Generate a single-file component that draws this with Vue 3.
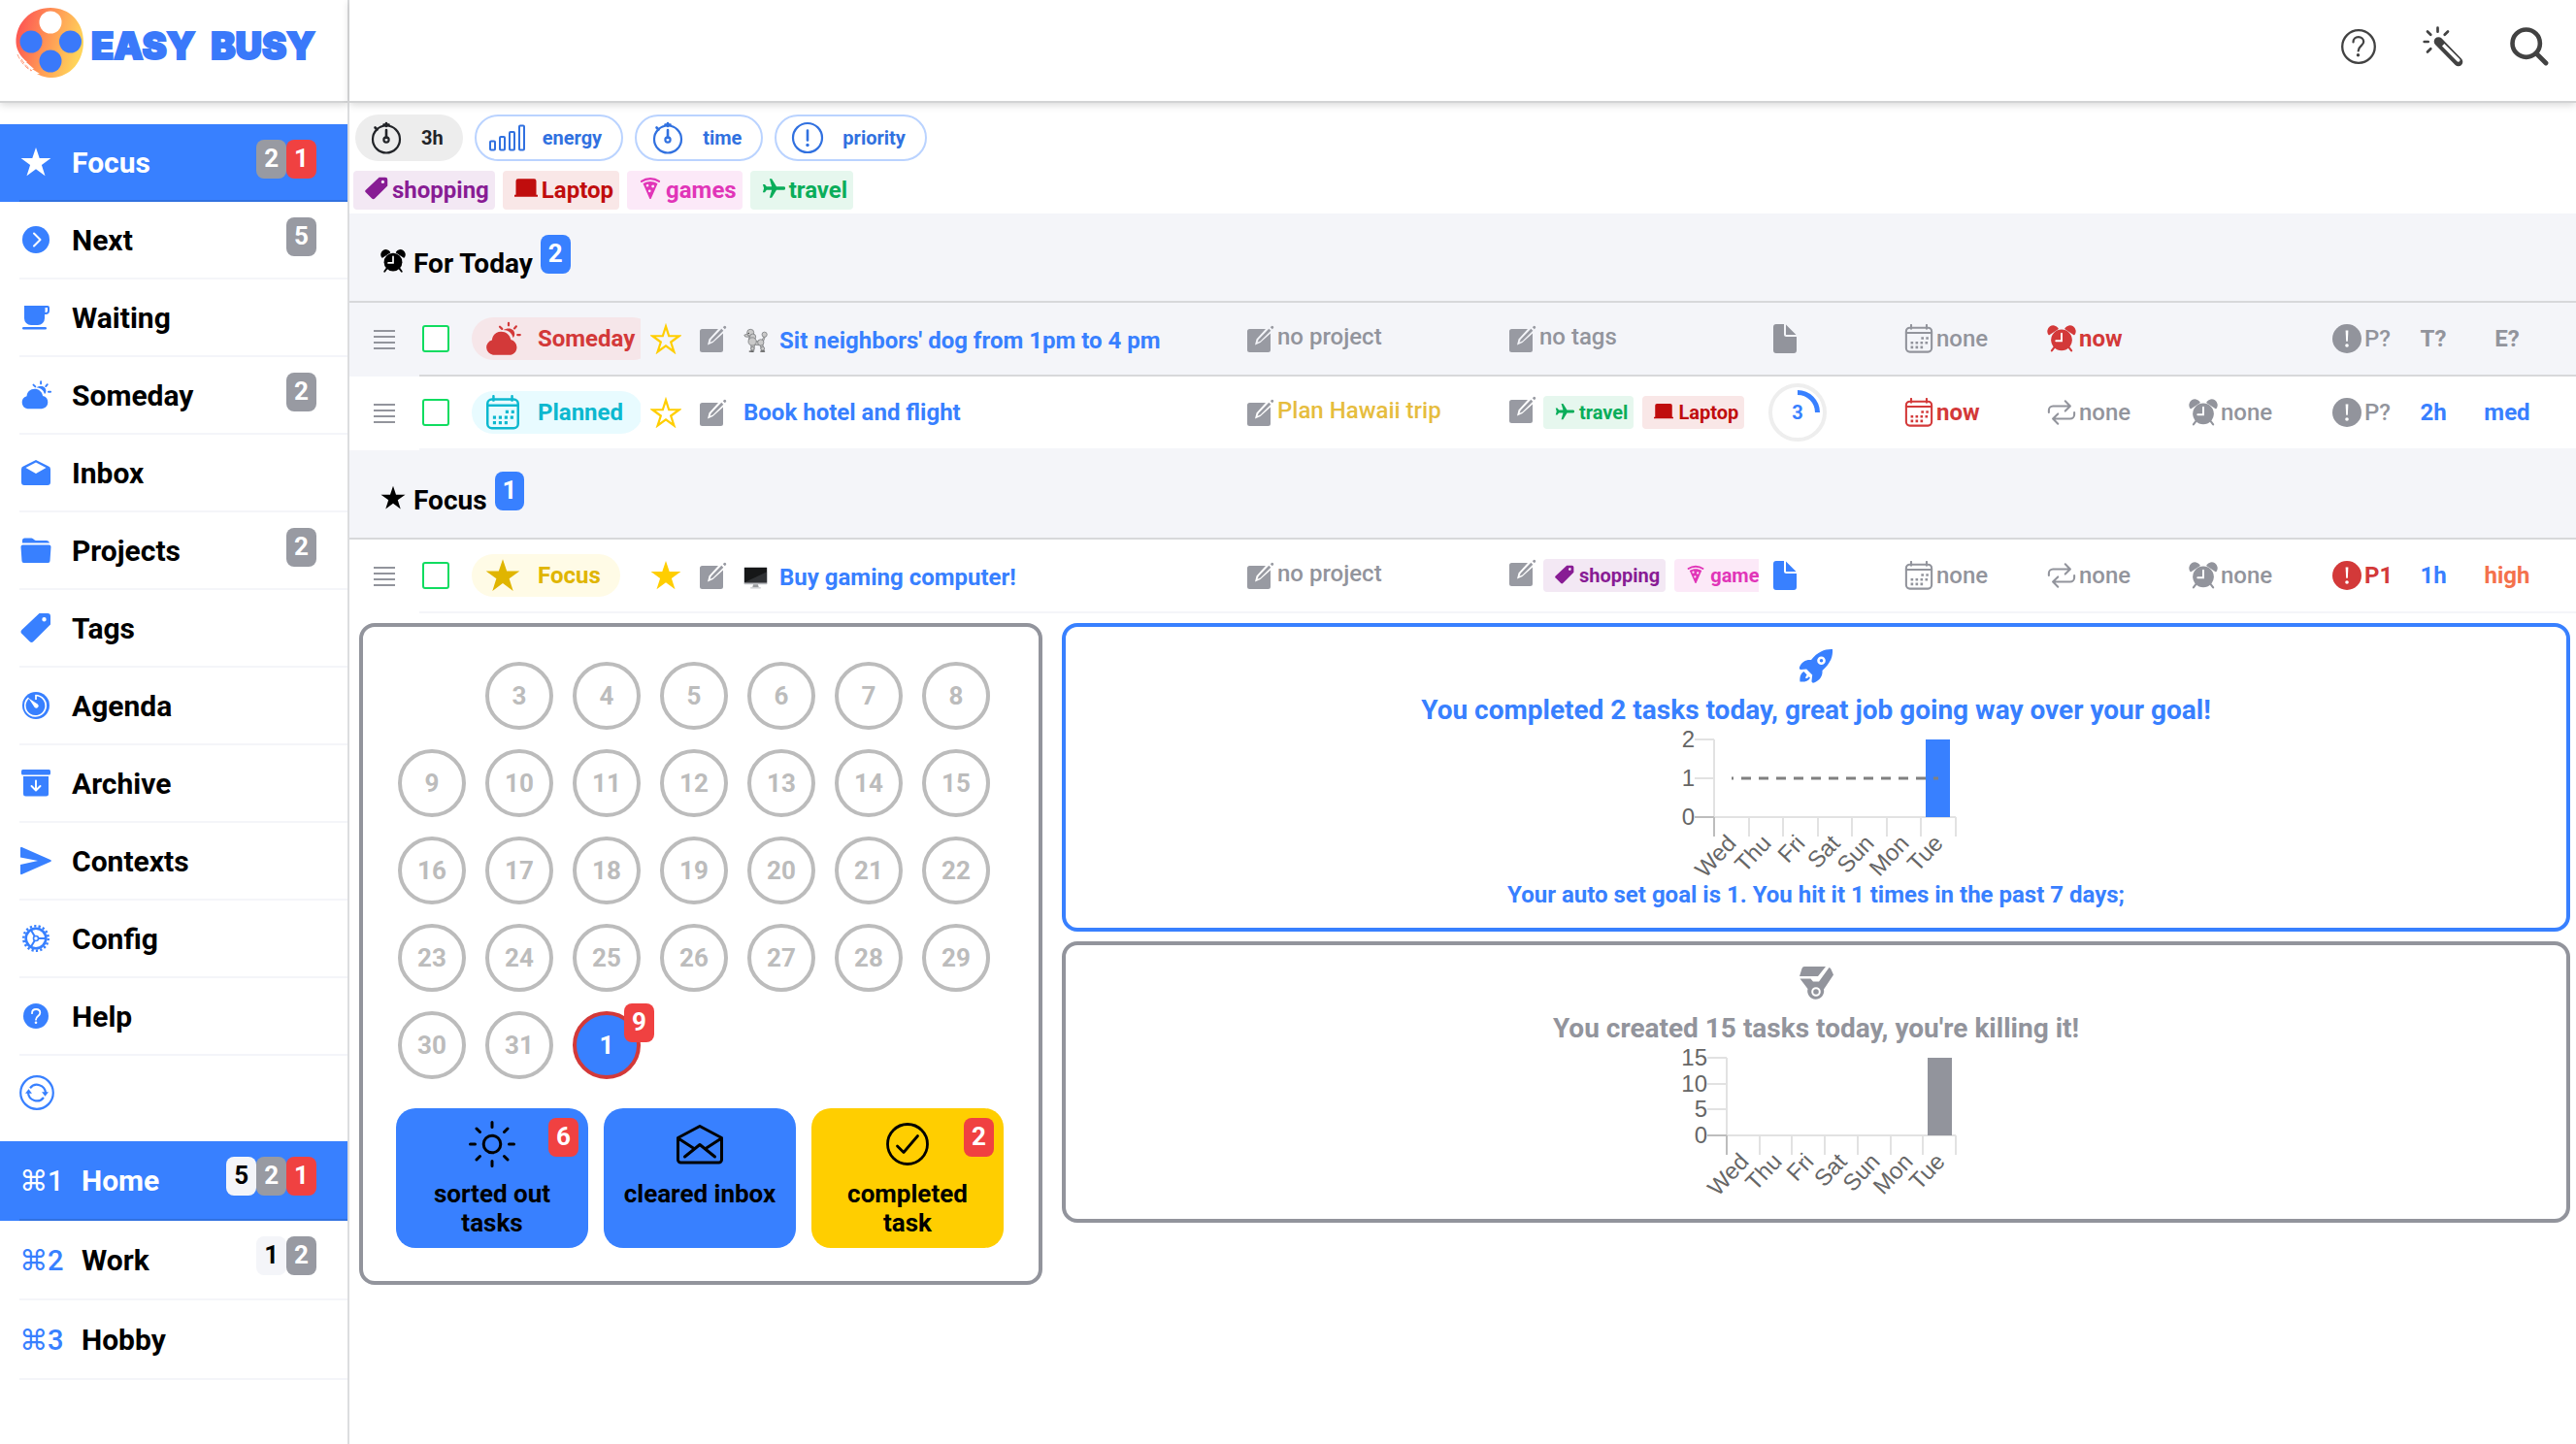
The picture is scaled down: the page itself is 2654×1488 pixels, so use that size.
<template>
  <div class="app">
    <svg class="sprite" aria-hidden="true">
      <symbol id="i-star" viewBox="0 0 32 32"><path fill="currentColor" d="M16 1l3.7 11H31.4l-9.5 6.9 3.6 11.3L16 23.2 6.5 30.2l3.6-11.3L.6 12h11.7z" /></symbol>
      <symbol id="i-star-outline" viewBox="2 1 28 29"><path fill="none" stroke="currentColor" stroke-width="2" stroke-linejoin="miter" d="M16 4l2.9 9h9.5l-7.7 5.7 2.9 9L16 22.1l-7.6 5.6 2.9-9L3.6 13h9.5z" /></symbol>
      <symbol id="i-next" viewBox="0 0 32 32"><circle cx="16" cy="16" r="14" fill="currentColor" /><path d="M14 9.5l6.5 6.5-6.5 6.5" fill="none" stroke="#fff" stroke-width="2" stroke-linecap="round" stroke-linejoin="round" /></symbol>
      <symbol id="i-cup" viewBox="0 0 32 32"><path fill="currentColor" d="M4 4h24a2 2 0 0 1 2 2v3a4 4 0 0 1-4 4h-1v4a7 7 0 0 1-7 7h-7a7 7 0 0 1-7-7zM25.5 6v5h.8A1.7 1.7 0 0 0 28 9.300V6z" fill-rule="evenodd" /><rect x="2" y="26" width="25" height="2.600" rx="1.300" fill="currentColor" /></symbol>
      <symbol id="i-cloud" viewBox="0 0 36 32"><path fill="currentColor" d="M9 31a7 7 0 0 1-1-13.700C8.500 12.500 12 9.500 16.500 9.500c4.500 0 8 2.800 9 7.500a7 7 0 0 1 5.500 7c0 4-3 7-7 7z" /><path fill="currentColor" d="M18.500 8c4.500 0 7.800 2.600 9 7 1-.8 1.500-2 1.500-3.500C29 8.500 26.500 6.500 23.700 6.500c-2 0-3.900.500-5.200 1.500z" /><path d="M23.400 1.500v2.200M30.500 4.600l-1.700 1.900M15.300 5l2 1.900M31.700 12.500h2.300" fill="none" stroke="currentColor" stroke-width="2" stroke-linecap="round" /></symbol>
      <symbol id="i-inbox" viewBox="0 0 32 32"><path fill="currentColor" fill-rule="evenodd" d="M16 3l13 6.600a3 3 0 0 1 2 2.800V26a3 3 0 0 1-3 3H4a3 3 0 0 1-3-3V12.400a3 3 0 0 1 2-2.800zM5.500 11L16 17l10.500-6L16 5.500z" /></symbol>
      <symbol id="i-folder" viewBox="0 0 32 32"><path fill="currentColor" d="M2 8.500V6a2.500 2.500 0 0 1 2.500-2.500h7c2 0 2.500 2.500 4.500 2.500h11a3 3 0 0 1 3 2.500zM2.500 10.500h27a2 2 0 0 1 2 2L30.500 27a2 2 0 0 1-2 2h-25a2 2 0 0 1-2-2L.5 12.500a2 2 0 0 1 2-2z" /></symbol>
      <symbol id="i-tag" viewBox="0 0 32 32"><path fill="currentColor" fill-rule="evenodd" d="M19.500 1H28a3 3 0 0 1 3 3v8.500L13.500 30a2.800 2.800 0 0 1-4 0L1.500 22a2.500 2.500 0 0 1 0-4zM24.500 5a2.200 2.200 0 1 0 .01 4.400A2.200 2.200 0 0 0 24.500 5z" /></symbol>
      <symbol id="i-agenda" viewBox="0 0 32 32"><circle cx="16" cy="16" r="14" fill="currentColor" /><path d="M16 5v5M15.500 5.500a10.700 10.700 0 1 1-7 2.600" fill="none" stroke="#fff" stroke-width="1.700" /><path d="M8.500 8.500l9.500 6.200a2.300 2.300 0 1 1-3.300 3.300z" fill="#fff" /></symbol>
      <symbol id="i-archive" viewBox="0 0 32 32"><rect x="1" y="2" width="30" height="5.500" rx="1.500" fill="currentColor" /><path fill="currentColor" d="M3 9h26v18a2.500 2.500 0 0 1-2.500 2.500h-21A2.500 2.500 0 0 1 3 27z" /><path d="M16 13.500v9.500M11.500 19l4.500 4.500 4.500-4.500" fill="none" stroke="#fff" stroke-width="1.900" stroke-linecap="round" stroke-linejoin="round" /></symbol>
      <symbol id="i-send" viewBox="0 0 32 32"><path fill="currentColor" d="M1.500 2L31 15c1.200.600 1.200 1.400 0 2L1.500 30a1 1 0 0 1-1.500-1v-9l18-4L0 12.500V3a1 1 0 0 1 1.500-1z" /></symbol>
      <symbol id="i-cog" viewBox="0 0 32 32"><circle cx="16" cy="16" r="10.300" fill="none" stroke="currentColor" stroke-width="2.600" /><circle cx="16" cy="16" r="12.700" fill="none" stroke="currentColor" stroke-width="2.600" stroke-dasharray="2.200 2.232" /><circle cx="16" cy="16" r="2.500" fill="#fff" stroke="currentColor" stroke-width="1.600" /><path d="M18.500 16H26M14.700 13.800L11 7.500M14.700 18.200L11 24.500" stroke="currentColor" stroke-width="2" /></symbol>
      <symbol id="i-help" viewBox="0 0 32 32"><circle cx="16" cy="16" r="13" fill="currentColor" /><path d="M12 13.200c0-2.500 1.800-4.200 4.200-4.200 2.300 0 4.100 1.500 4.100 3.700 0 3.300-4.300 3.300-4.300 7" fill="none" stroke="#fff" stroke-width="1.800" stroke-linecap="round" /><circle cx="16" cy="22.700" r="1.300" fill="#fff" /></symbol>
      <symbol id="i-sync" viewBox="0 0 36 36"><g fill="none" stroke="currentColor" stroke-width="2.200"><circle cx="18" cy="18" r="16.800" /><path d="M11 13.200A9 9 0 0 1 27 18M25 23A9 9 0 0 1 9 18" /></g><path fill="currentColor" d="M6 18.800l3.500-4.600 3.500 4.600zM23 17.200l3.500 4.600 3.500-4.600z" /></symbol>
      <symbol id="i-help-outline" viewBox="0 0 36 36"><circle cx="18" cy="18" r="16.800" fill="none" stroke="currentColor" stroke-width="2.300" /><path d="M12.500 13.500c0-3.200 2.200-5.300 5.300-5.300s5.400 1.900 5.400 4.900c0 4-5.500 4.300-5.500 9.400" fill="none" stroke="currentColor" stroke-width="2.200" stroke-linecap="round" /><circle cx="17.500" cy="26.700" r="1.700" fill="currentColor" /></symbol>
      <symbol id="i-wand" viewBox="0 0 42 42"><path fill="currentColor" fill-rule="evenodd" d="M13 12.500a4.700 4.700 0 0 1 6.600 0L40 33.500a4.500 4.500 0 0 1-6.400 6.400L13 19a4.700 4.700 0 0 1 0-6.500zM20 20.600l15.300 15.500a1.700 1.700 0 0 0 2.700-2.300L22.300 18z" /><path d="M15.500 1.700v4M5 5.500l3.300 3.300M26 5.500l-3.300 3.300M1.700 16h4M5 26.500l3.300-3.300" stroke="currentColor" stroke-width="2.700" stroke-linecap="round" /></symbol>
      <symbol id="i-search" viewBox="0 0 40 40"><circle cx="16.700" cy="16.700" r="14.200" fill="none" stroke="currentColor" stroke-width="4.600" /><path d="M27 27l10 10" stroke="currentColor" stroke-width="4.800" stroke-linecap="round" /></symbol>
      <symbol id="i-timer" viewBox="0 0 40 40"><circle cx="20" cy="21.500" r="14" fill="none" stroke="currentColor" stroke-width="2.200" /><path d="M20 12v8M20 5v3M8.500 9.500l2 2M17.500 6.500h5" fill="none" stroke="currentColor" stroke-width="2.600" stroke-linecap="round" /><circle cx="20" cy="22" r="2.600" fill="none" stroke="currentColor" stroke-width="2.200" /></symbol>
      <symbol id="i-bars" viewBox="0 0 40 40"><g fill="none" stroke="currentColor" stroke-width="2"><rect x="2" y="23.500" width="5" height="9" rx="1" /><rect x="12" y="19" width="5" height="13.500" rx="1" /><rect x="22" y="14" width="5" height="18.500" rx="1" /><rect x="32" y="7.500" width="5" height="25" rx="1" /></g></symbol>
      <symbol id="i-alert-outline" viewBox="0 0 40 40"><circle cx="20" cy="20" r="15" fill="none" stroke="currentColor" stroke-width="2.200" /><path d="M20 12.500v10" stroke="currentColor" stroke-width="2.600" stroke-linecap="round" /><circle cx="20" cy="27.500" r="1.700" fill="currentColor" /></symbol>
      <symbol id="i-laptop" viewBox="0 0 32 32"><path fill="currentColor" d="M5 3h22a3 3 0 0 1 3 3v19h2v2.500H0V25h2V6a3 3 0 0 1 3-3z" /></symbol>
      <symbol id="i-pizza" viewBox="0 0 32 32"><path d="M4 6.500C11 1.500 21 1.500 28 6.500" fill="none" stroke="currentColor" stroke-width="3" stroke-linecap="round" /><path fill="currentColor" fill-rule="evenodd" d="M6 9.500c6.500-3.700 13.500-3.700 20 0L16.800 30.500h-1.600zM12 10.500a1.800 1.800 0 1 0 .01 3.600 1.800 1.800 0 0 0-.01-3.600zM19.500 11.500a1.900 1.900 0 1 0 .01 3.800 1.900 1.900 0 0 0-.01-3.800zM15 18a1.800 1.800 0 1 0 .01 3.600A1.800 1.800 0 0 0 15 18z" /></symbol>
      <symbol id="i-plane" viewBox="0 0 32 32"><path fill="currentColor" d="M30 18.300H20L13.500 29h-3l3-10.700H6.500L4 21.500H1.200L2.800 16 1.200 10.500H4l2.500 3.200h7L10.500 3h3L20 13.700h10a2.300 2.300 0 0 1 0 4.600z" /></symbol>
      <symbol id="i-alarm" viewBox="-1 -1 34 34"><g fill="currentColor"><circle cx="16" cy="17.500" r="12.300" /><path d="M1.500 10.500A5.500 5.500 0 0 1 11 4.200zM30.500 10.500A5.500 5.500 0 0 0 21 4.200z" stroke="currentColor" stroke-width="2.400" stroke-linejoin="round" /></g><path d="M7.500 26l-3 4M24.500 26l3 4" stroke="currentColor" stroke-width="2.400" stroke-linecap="round" /><path d="M16 10v8.500H9.500" fill="none" stroke="#fff" stroke-width="2.200" stroke-linecap="round" /></symbol>
      <symbol id="i-calendar" viewBox="0 0 32 32"><rect x="2" y="4" width="28" height="26.500" rx="4" fill="none" stroke="currentColor" stroke-width="2.200" /><path d="M2 9.500h28M7.500 1v4M24.500 1v4" stroke="currentColor" stroke-width="2.200" stroke-linecap="round" /><path d="M18.500 15.500h8M7 20.500h20M7 25.500h14" stroke="currentColor" stroke-width="2.800" stroke-dasharray="2.800 2.500" /></symbol>
      <symbol id="i-repeat" viewBox="0 0 32 32"><path d="M2 16v-2.500C2 11 4 9 6.500 9H24M20 3.500L25.500 9 20 14.500M30 16v2.500c0 2.500-2 4.500-4.500 4.500H8M12 17.500L6.500 23l5.500 5.500" fill="none" stroke="currentColor" stroke-width="2.200" stroke-linecap="round" stroke-linejoin="round" /></symbol>
      <symbol id="i-alert" viewBox="0 0 28 28"><circle cx="14" cy="14" r="14" fill="currentColor" /><path d="M12.700 6h2.600l-.5 10.500h-1.600z" fill="#fff" /><circle cx="14" cy="20.500" r="1.700" fill="#fff" /></symbol>
      <symbol id="i-edit" viewBox="0 0 28 28"><path fill="currentColor" d="M2.500 4H19L9.500 14.500l-1.500 6 5.500-2.500L24 8.500V25.500a2.500 2.500 0 0 1-2.500 2.500h-19A2.500 2.500 0 0 1 0 25.500v-19A2.500 2.500 0 0 1 2.500 4z" /><path fill="currentColor" d="M22.300 3.800l2 2L13.500 16.500l-3 1.200 1.200-3zM24.800 1.300a1.300 1.300 0 0 1 2 2l-1 1-2-2z" /></symbol>
      <symbol id="i-file" viewBox="0 0 24 30"><path fill="currentColor" d="M3 0h8v10.500a2.500 2.500 0 0 0 2.500 2.500H24v14a3 3 0 0 1-3 3H3a3 3 0 0 1-3-3V3a3 3 0 0 1 3-3zM13 .5l10.500 10.500H13z" /></symbol>
      <symbol id="i-drag" viewBox="0 0 22 22"><path d="M0 2h22M0 8h22M0 14h22M0 20h22" stroke="currentColor" stroke-width="2" /></symbol>
      <symbol id="i-sun" viewBox="0 0 48 48"><g fill="none" stroke="currentColor" stroke-width="3" stroke-linecap="round"><circle cx="24" cy="24" r="8.800" /><path d="M24 1.500v5M24 41.500v5M1.500 24h5M41.500 24h5M8 8l3.500 3.500M36.500 36.500L40 40M8 40l3.500-3.500M36.500 11.500L40 8" /></g></symbol>
      <symbol id="i-mail-open" viewBox="0 0 48 48"><g fill="none" stroke="currentColor" stroke-width="3" stroke-linejoin="round" stroke-linecap="round"><path d="M1.500 17.500L24 5.500l22.500 12V40a3 3 0 0 1-3 3h-39a3 3 0 0 1-3-3z" /><path d="M2.500 18.500L18 28.500M45.500 18.500L30 28.500M8.500 37L24 24.500 39.500 37" /></g></symbol>
      <symbol id="i-check" viewBox="0 0 48 48"><g fill="none" stroke="currentColor" stroke-width="2.800" stroke-linecap="round" stroke-linejoin="round"><circle cx="24" cy="24" r="20.500" /><path d="M13.500 26l6.500 6.500L34.500 15.500" /></g></symbol>
      <symbol id="i-rocket" viewBox="0 0 36 36"><path fill="currentColor" fill-rule="evenodd" d="M35 1c.500 7-1.500 14-10.500 22 .5 5.500-2.500 10-8.500 12.500-1.500.500-2.800-.500-2.500-2l.7-6-6-6-5.700.500c-1.500 0-2-1-1.500-2.500C3 14 7.500 11.500 13 12 20 3 28 .5 35 1zM23.500 8.500a4.300 4.300 0 1 0 .01 8.600 4.300 4.300 0 0 0-.01-8.600zM23.500 11a1.800 1.800 0 1 1 .01 3.600A1.800 1.800 0 0 1 23.500 11z" /><path fill="currentColor" d="M5.500 24C2 26 1 30 1.500 34.500c4.500.500 8.500-.5 10.500-4l-1.300-1.300c-1 1.300-2 1.800-3.500 1.800 0-1.500.500-2.500 1.500-3.500z" /></symbol>
      <symbol id="i-medal" viewBox="0 0 36 36"><path fill="currentColor" d="M6 0h22L20 10H1L3.500 2C4 .7 4.800 0 6 0zM1.500 12.500h11l2.500 3h6L31.500 1c1.300.4 2 1.500 2.500 3l2 4.500-10 15a8.500 8.500 0 1 1-16.500-.5z" /><circle cx="18" cy="26" r="3.800" fill="none" stroke="#fff" stroke-width="2" /></symbol>
    </svg>

    <aside class="sidebar">
      <div class="toolbar">
        <a class="logo" href="#">
          <svg width="72" height="74" viewBox="0 0 72 74" aria-hidden="true">
            <defs>
              <linearGradient id="sunset" x1="0" y1="0.300" x2="1" y2="0.600">
                <stop offset="0.050" stop-color="#fd5a53" />
                <stop offset="0.550" stop-color="#ffa156" />
                <stop offset="0.950" stop-color="#ffd45a" />
              </linearGradient>
            </defs>
            <path fill="url(#sunset)" d="M37 0c20 0 34 15 34 35S58 71 39 72c-8 0-12-2-16-4l3 0-8-5 2 0-8-7 1 0C6 50 2 44 1.500 36 1 15 17 0 37 0z" />
            <path d="M3 48c4 9 8 13 14 17M7 53c4 6 7 9 11 12" fill="none" stroke="#ff9b7a" stroke-width="1" stroke-dasharray="5 2" />
            <circle cx="37" cy="15" r="11.500" fill="#fff" />
            <g fill="#3a79fa"><circle cx="17" cy="35" r="11.500" /><circle cx="57.500" cy="35" r="11.500" /><circle cx="37" cy="55" r="11.500" /></g>
          </svg>
          <span class="brand"><span>EASY</span><span>BUSY</span></span>
        </a>
      </div>
      <nav class="nav">
        <a v-for="item in lists" :key="item.label" href="#" class="nav-item" :class="{ active: item.active }">
          <svg class="nav-icon"><use :href="'#i-' + item.icon" /></svg>
          <span class="nav-inner">
            <span class="nav-label">{{ item.label }}</span>
            <span class="badges"><span v-for="b in item.badges" :key="b.color" class="badge" :class="b.color">{{ b.n }}</span></span>
          </span>
        </a>
      </nav>
      <button class="sync" aria-label="Sync"><svg><use href="#i-sync" /></svg></button>
      <nav class="nav contexts">
        <a v-for="ctx in contexts" :key="ctx.label" href="#" class="nav-item" :class="{ active: ctx.active }">
          <span class="shortcut">{{ ctx.key }}</span>
          <span class="nav-inner">
            <span class="nav-label">{{ ctx.label }}</span>
            <span class="badges"><span v-for="b in ctx.badges" :key="b.color" class="badge" :class="b.color">{{ b.n }}</span></span>
          </span>
        </a>
      </nav>
    </aside>

    <main class="main">
      <header class="toolbar actions">
        <button aria-label="Help"><svg width="36" height="36"><use href="#i-help-outline" /></svg></button>
        <button aria-label="Assistant"><svg width="42" height="42"><use href="#i-wand" /></svg></button>
        <button aria-label="Search"><svg width="40" height="40"><use href="#i-search" /></svg></button>
      </header>

      <div class="filters">
        <button v-for="f in filters" :key="f.label" class="chip" :class="{ selected: f.selected }">
          <svg><use :href="'#i-' + f.icon" /></svg>{{ f.label }}
        </button>
      </div>
      <div class="tags">
        <button v-for="t in ['shopping', 'Laptop', 'games', 'travel']" :key="t" class="tag" :class="t">
          <svg><use :href="'#i-' + tagIcons[t]" /></svg>{{ t }}
        </button>
      </div>

      <section v-for="group in groups" :key="group.title">
        <h2 class="group-title">
          <svg><use :href="'#i-' + group.icon" /></svg>
          <span>{{ group.title }}</span>
          <span class="badge blue">{{ group.tasks.length }}</span>
        </h2>
        <div v-for="task in group.tasks" :key="task.title" class="task" :class="{ shaded: task.shaded }">
          <svg class="drag"><use href="#i-drag" /></svg>
          <div class="task-body">
            <div><input type="checkbox" class="done" :aria-label="task.title" /></div>
            <div class="state-cell">
              <button class="state" :class="task.state"><svg><use :href="'#i-' + stateIcons[task.state]" /></svg>{{ task.state }}</button>
            </div>
            <button class="star" aria-label="Focus"><svg><use :href="task.starred ? '#i-star' : '#i-star-outline'" /></svg></button>
            <button class="edit" aria-label="Edit"><svg class="edit-icon"><use href="#i-edit" /></svg></button>
            <a href="#" class="title" :class="{ 'with-emoji': task.emoji }">
              <svg v-if="task.emoji === 'poodle'" class="emoji" viewBox="0 0 26 26">
                <g fill="#c9c9c9" stroke="#77797c" stroke-width="0.800">
                  <path d="M5 5.500L.8 7l1 1.800 4 .4z" />
                  <path d="M7.500 8l1.500 5 10 1 3-5.500 1 .7-2.500 7 1.500 8h-2.500L18 18l-6-.5-1 7.500H8.500L8 17 5.500 11z" />
                  <circle cx="7.500" cy="4.500" r="3.700" /><circle cx="10" cy="9" r="3.200" /><circle cx="9.500" cy="14" r="4.300" />
                  <circle cx="18.500" cy="15" r="3.300" /><circle cx="22.500" cy="6.500" r="2.700" /><circle cx="9.700" cy="21.500" r="1.800" /><circle cx="20.500" cy="21.500" r="2" />
                </g>
                <circle cx="5.500" cy="5" r="0.700" fill="#222" />
                <path d="M6 24.500h4.500M18 24.500h5" stroke="#555" stroke-width="1.400" />
              </svg>
              <svg v-if="task.emoji === 'desktop'" class="emoji" viewBox="0 0 26 26">
                <rect x="0.500" y="2" width="25" height="18.500" rx="1" fill="#b9bbbf" />
                <rect x="1" y="2.500" width="24" height="16" fill="#161718" /><path d="M1 18.500L25 7v11.500z" fill="#303235" />
                <path d="M10.500 20.500h5l1 3.500h-7z" fill="#9a9ca0" /><rect x="7.500" y="23.500" width="11" height="1.500" fill="#d0d1d4" />
              </svg>
              {{ task.title }}
            </a>
            <div class="project">
              <svg class="edit-icon"><use href="#i-edit" /></svg>
              <span :class="{ named: task.project }">{{ task.project || 'no project' }}</span>
            </div>
            <div class="task-tags" :class="{ filled: task.tags.length }">
              <svg class="edit-icon"><use href="#i-edit" /></svg>
              <span v-if="!task.tags.length" class="no-tags">no tags</span>
              <span v-for="t in task.tags" :key="t" class="tag small" :class="t"><svg><use :href="'#i-' + tagIcons[t]" /></svg>{{ t }}</span>
            </div>
            <div class="notes">
              <svg v-if="task.subtasks" width="60" height="60" viewBox="0 0 60 60" class="progress">
                <circle cx="30" cy="30" r="28" fill="none" stroke="#eee" stroke-width="4" />
                <path d="M30 9.500A20.500 20.500 0 0 1 50.500 30" fill="none" stroke="currentColor" stroke-width="5" />
                <text x="30" y="37" text-anchor="middle">{{ task.subtasks }}</text>
              </svg>
              <svg v-else class="file" :class="{ on: task.note }"><use href="#i-file" /></svg>
            </div>
            <div v-for="(m, i) in task.meta" :key="i" class="meta" :class="m && m.color">
              <template v-if="m"><svg><use :href="'#i-' + m.icon" /></svg>{{ m.text }}</template>
            </div>
            <div class="level" :class="task.energy">{{ task.time }}</div>
            <div class="level energy" :class="task.energy">{{ task.energy || 'E?' }}</div>
          </div>
        </div>
      </section>

      <div class="dashboard">
        <section class="card calendar">
          <ol class="days">
            <li v-for="d in days" :key="d" class="day" :class="{ today: d === 1, first: d === 3 }">
              {{ d }}<span v-if="d === 1" class="badge red">9</span>
            </li>
          </ol>
          <div class="tiles">
            <div v-for="a in achievements" :key="a.text" class="tile" :class="{ yellow: a.yellow }">
              <svg><use :href="'#i-' + a.icon" /></svg>
              <span>{{ a.text }}</span>
              <span v-if="a.count" class="badge red">{{ a.count }}</span>
            </div>
          </div>
        </section>

        <div class="stats">
          <section v-for="s in stats" :key="s.icon" class="card stat" :class="s.color">
            <svg class="stat-icon"><use :href="'#i-' + s.icon" /></svg>
            <h3>{{ s.title }}</h3>
            <svg class="chart" width="300" height="158" viewBox="0 0 300 158">
              <g stroke="#e2e2e2" stroke-width="2">
                <path :d="`M${s.left} 12V92H294`" fill="none" />
                <path v-for="(y, i) in s.yTicks" :key="y" :d="`M${s.left - 20} ${tickY(s, i)}h20`" :stroke="y === 0 ? '#bdbdbd' : '#e2e2e2'" />
                <path v-for="i in 8" :key="i" :d="`M${tickX(s, i - 1)} 92v20`" :stroke="i === 1 ? '#bdbdbd' : '#e2e2e2'" />
              </g>
              <text v-for="(y, i) in s.yTicks" :key="'y' + y" :x="s.left - 20" :y="tickY(s, i) + 8" text-anchor="end">{{ y }}</text>
              <rect :x="tickX(s, 6) + 5" y="12" width="25" height="80" fill="currentColor" />
              <path v-if="s.goal" :d="`M${tickX(s, 0) + 18} 52H${tickX(s, 6) + 18}`" stroke="#808080" stroke-width="3" stroke-dasharray="10 8" stroke-dashoffset="8" />
              <text v-for="(d, i) in weekdays" :key="d" text-anchor="end" :transform="`translate(${tickX(s, i) + 24} 120) rotate(-47)`">{{ d }}</text>
            </svg>
            <p v-if="s.goal">{{ s.goal }}</p>
          </section>
        </div>
      </div>
    </main>
  </div>
</template>

<script setup>
const grey = n => ({ n, color: 'grey' });
const red = n => ({ n, color: 'red' });
const light = n => ({ n, color: 'light' });

const lists = [
  { label: 'Focus', icon: 'star', badges: [grey(2), red(1)], active: true },
  { label: 'Next', icon: 'next', badges: [grey(5)] },
  { label: 'Waiting', icon: 'cup' },
  { label: 'Someday', icon: 'cloud', badges: [grey(2)] },
  { label: 'Inbox', icon: 'inbox' },
  { label: 'Projects', icon: 'folder', badges: [grey(2)] },
  { label: 'Tags', icon: 'tag' },
  { label: 'Agenda', icon: 'agenda' },
  { label: 'Archive', icon: 'archive' },
  { label: 'Contexts', icon: 'send' },
  { label: 'Config', icon: 'cog' },
  { label: 'Help', icon: 'help' },
];

const contexts = [
  { key: '⌘1', label: 'Home', badges: [light(5), grey(2), red(1)], active: true },
  { key: '⌘2', label: 'Work', badges: [light(1), grey(2)] },
  { key: '⌘3', label: 'Hobby' },
];

const filters = [
  { label: '3h', icon: 'timer', selected: true },
  { label: 'energy', icon: 'bars' },
  { label: 'time', icon: 'timer' },
  { label: 'priority', icon: 'alert-outline' },
];

const tagIcons = { shopping: 'tag', Laptop: 'laptop', games: 'pizza', travel: 'plane' };
const stateIcons = { Someday: 'cloud', Planned: 'calendar', Focus: 'star' };

const groups = [
  {
    title: 'For Today',
    icon: 'alarm',
    tasks: [
      {
        title: 'Sit neighbors\' dog from 1pm to 4 pm',
        emoji: 'poodle',
        state: 'Someday',
        shaded: true,
        tags: [],
        meta: [
          { icon: 'calendar', text: 'none' },
          { icon: 'alarm', text: 'now', color: 'urgent' },
          null,
          { icon: 'alert', text: 'P?' },
        ],
        time: 'T?',
        energy: '',
      },
      {
        title: 'Book hotel and flight',
        state: 'Planned',
        project: 'Plan Hawaii trip',
        tags: ['travel', 'Laptop'],
        subtasks: 3,
        meta: [
          { icon: 'calendar', text: 'now', color: 'urgent' },
          { icon: 'repeat', text: 'none' },
          { icon: 'alarm', text: 'none' },
          { icon: 'alert', text: 'P?' },
        ],
        time: '2h',
        energy: 'med',
      },
    ],
  },
  {
    title: 'Focus',
    icon: 'star',
    tasks: [
      {
        title: 'Buy gaming computer!',
        emoji: 'desktop',
        state: 'Focus',
        starred: true,
        tags: ['shopping', 'games'],
        note: true,
        meta: [
          { icon: 'calendar', text: 'none' },
          { icon: 'repeat', text: 'none' },
          { icon: 'alarm', text: 'none' },
          { icon: 'alert', text: 'P1', color: 'urgent' },
        ],
        time: '1h',
        energy: 'high',
      },
    ],
  },
];

// 3rd to 31st, followed by today
const days = [...Array.from({ length: 29 }, (_, i) => i + 3), 1];

const achievements = [
  { text: 'sorted out tasks', icon: 'sun', count: 6 },
  { text: 'cleared inbox', icon: 'mail-open' },
  { text: 'completed task', icon: 'check', count: 2, yellow: true },
];

const weekdays = ['Wed', 'Thu', 'Fri', 'Sat', 'Sun', 'Mon', 'Tue'];
const stats = [
  {
    icon: 'rocket',
    color: 'blue',
    title: 'You completed 2 tasks today, great job going way over your goal!',
    goal: 'Your auto set goal is 1. You hit it 1 times in the past 7 days;',
    yTicks: [2, 1, 0],
    left: 45,
  },
  {
    icon: 'medal',
    color: 'grey',
    title: 'You created 15 tasks today, you\'re killing it!',
    yTicks: [15, 10, 5, 0],
    left: 58,
  },
];

const tickX = (s, i) => Math.round(s.left + (294 - s.left) * i / 7);
const tickY = (s, i) => Math.round(12 + 80 * i / (s.yTicks.length - 1));
</script>

<style>
body { margin: 0; background: #fff; }
</style>

<style scoped>
.app { display: grid; grid-template-columns: 360px 1fr; min-height: 100vh; font-family: Roboto, "DejaVu Sans", sans-serif; font-weight: 700; color: #000; }
.app *, .app *::before { box-sizing: border-box; }
.sprite { display: none; }
a { color: inherit; text-decoration: none; }
button { font: inherit; color: inherit; background: none; border: 0; padding: 0; display: flex; align-items: center; }
svg { flex: none; }

.toolbar { height: 106px; border-bottom: 2px solid #d2d3d4; box-shadow: 0 2px 8px rgba(0, 0, 0, 0.16); display: flex; }
.sidebar { border-right: 2px solid #dcdddf; overflow: hidden; }
.logo { display: flex; padding: 8px 0 0 15px; gap: 7px; color: #3a79fa; }
.brand { display: flex; gap: 16px; font-family: Inter, Lato, sans-serif; font-weight: 900; font-size: 38px; line-height: 78px; -webkit-text-stroke: 2px #3a79fa; }

.nav { margin-top: 22px; }
.nav-item { display: flex; height: 80px; padding-left: 20px; color: #3880ff; position: relative; }
.nav-item::before { content: ""; position: absolute; left: 20px; right: 0; bottom: 0; height: 2px; background: #f4f5f9; }
.nav-icon { width: 34px; height: 32px; margin: 23px 20px 0 0; }
.nav-inner { flex: 1; display: flex; }
.nav-label { flex: 1; font-size: 30px; line-height: 80px; color: #000; }
.badges { display: flex; padding: 16px 32px 0 0; }
.active { background: #3880ff; color: #fff; }
.active .nav-label { color: #fff; }
.active::before { background: #3171e0; }
.badge { display: block; height: 40px; padding: 0 8px; border-radius: 8px; font-size: 26px; line-height: 38px; color: #fff; }
.badge.grey { background: #989aa2; }
.badge.red { background: #f04141; }
.badge.light { background: #f4f5f9; color: #000; }
.badge.blue { background: #3880ff; }
.sync { margin: 20px 0 0 20px; color: #3880ff; }
.sync svg { width: 36px; height: 36px; }
.contexts { margin-top: 32px; }
.contexts .nav-item { height: 82px; }
.shortcut { width: 64px; font-size: 29px; line-height: 82px; font-weight: 500; }
.contexts .nav-label { line-height: 82px; }

.main { min-width: 0; }
.actions { justify-content: flex-end; align-items: center; gap: 48px; padding: 0 28px 8px 0; color: #424242; }
.filters { display: flex; gap: 12px; padding: 12px 6px 10px; }
.chip { height: 48px; padding: 0 20px 0 12px; border: 2px solid #bad3ff; border-radius: 24px; font-size: 20px; color: #3171e0; }
.chip svg { width: 40px; height: 40px; margin-right: 16px; }
.chip.selected { background: #ededed; border: 0; color: #222428; }
.tags { display: flex; gap: 8px; padding: 0 4px 4px; }
.tag { display: flex; align-items: center; height: 40px; padding: 0 6px 0 12px; border-radius: 4px; font-size: 24px; }
.tag svg { width: 24px; height: 24px; margin: 0 4px 4px 0; }
.tag.small { height: 34px; margin-right: 9px; font-size: 20px; flex: none; }
.tag.small svg { width: 20px; height: 20px; margin: 0 5px 2px 0; }
.shopping { color: #881c94; background: #f3e8f4; }
.Laptop { color: #c00d0d; background: #f9e7e7; }
.games { color: #e135b8; background: #fce9f8; }
.travel { color: #0aad5a; background: #e6f7ee; }

.group-title { display: flex; align-items: flex-end; gap: 8px; height: 92px; margin: 0; padding: 0 0 28px 32px; background: #f4f5f9; border-bottom: 2px solid #d7d8da; font-size: 28px; line-height: 20px; }
.group-title svg { width: 26px; height: 26px; }

.task { display: flex; height: 76px; padding-left: 25px; color: #92949c; font-size: 24px; background: #fff; }
.task.shaded { background: #f4f5f9; }
.drag { width: 22px; height: 22px; margin: 27px 25px 0 0; }
.task-body { flex: 1; min-width: 0; display: grid; grid-template-columns: 54px 174px 52px 54px 519fr 270fr 257fr 150px 147px 146px 148px 66px 76px 76px; padding-right: 33px; align-items: center; border-bottom: 2px solid #f4f5f9; }
.shaded .task-body { border-bottom-color: #d7d8da; }
.done { appearance: none; display: block; width: 28px; height: 28px; margin: 0 0 0 3px; border: 2px solid #10dc60; border-radius: 3px; background: #fff; }
.state-cell { overflow: hidden; }
.state { height: 44px; padding: 0 20px 0 12px; border-radius: 22px; }
.state svg { width: 40px; height: 36px; margin-right: 16px; }
.Someday { color: #d33939; background: #f6e6e9; }
.Planned { color: #0cb8cf; background: #e8fbff; }
.Focus { color: #e0b500; background: #fffbe6; }
.star { justify-content: center; color: #ffce00; }
.star svg { width: 32px; height: 32px; }
.edit { padding-left: 9px; }
.edit-icon { width: 28px; height: 28px; color: #989aa2; }
.title { color: #3880ff; display: flex; align-items: center; white-space: nowrap; }
.with-emoji { padding-top: 4px; }
.emoji { width: 25px; height: 26px; margin-right: 12px; }
.project, .task-tags, .meta { display: flex; align-items: center; gap: 3px; font-weight: 500; white-space: nowrap; }
.project span, .no-tags { padding-bottom: 4px; }
.project .named { color: #e6bd3e; }
.task-tags { overflow: hidden; }
.task-tags.filled { align-items: flex-start; gap: 0; font-weight: 700; }
.filled .edit-icon { margin-right: 7px; }
.notes { padding-left: 10px; }
.notes svg { display: block; }
.file { width: 24px; height: 30px; margin-left: 5px; }
.file.on, .progress { color: #3880ff; }
.progress text { font-size: 20px; fill: currentColor; }
.meta svg { width: 30px; height: 30px; }
.urgent { color: #d33939; font-weight: 700; }
.level { text-align: center; }
.med, .high { color: #3880ff; }
.energy.high { color: #f4714c; }

.dashboard { display: grid; grid-template-columns: 704px 1fr; gap: 20px; padding: 10px 6px 0 10px; align-items: start; }
.card { border: 4px solid #92949c; border-radius: 16px; }
.calendar { padding: 36px 34px 34px; }
.days { display: grid; grid-template-columns: repeat(7, 70px); gap: 20px; margin: 0 0 30px 2px; padding: 0; list-style: none; }
.day { position: relative; height: 70px; border: 4px solid #bcbcbc; border-radius: 50%; color: #bcbcbc; font-size: 26px; line-height: 62px; text-align: center; }
.first { grid-column-start: 2; }
.today { background: #3880ff; border-color: #d33939; color: #fff; }
.day .badge { position: absolute; top: -12px; right: -18px; }
.tiles { display: grid; grid-template-columns: repeat(3, 198px); gap: 16px; }
.tile { position: relative; height: 144px; padding: 13px 20px 0; border-radius: 20px; background: #3880ff; font-size: 26px; line-height: 30px; text-align: center; }
.tile svg { display: block; width: 48px; height: 48px; margin: 0 auto 12px; }
.tile:nth-child(2) { padding-left: 12px; padding-right: 12px; }
.yellow { background: #ffce00; }
.tile .badge { position: absolute; top: 10px; right: 10px; }

.stats { display: grid; gap: 10px; }
.stat { display: flex; flex-direction: column; align-items: center; padding: 22px 0 20px; color: #92949c; }
.stat.blue { color: #3880ff; border-color: #3880ff; }
.stat-icon { width: 36px; height: 36px; }
.stat h3 { margin: 10px 0 0; font-size: 28px; line-height: 36px; }
.chart { overflow: visible; }
.chart text { font-family: "Liberation Sans", Arial, sans-serif; font-size: 24px; font-weight: 400; fill: #666; }
.stat p { margin: 0; font-size: 24px; line-height: 28px; }
</style>
